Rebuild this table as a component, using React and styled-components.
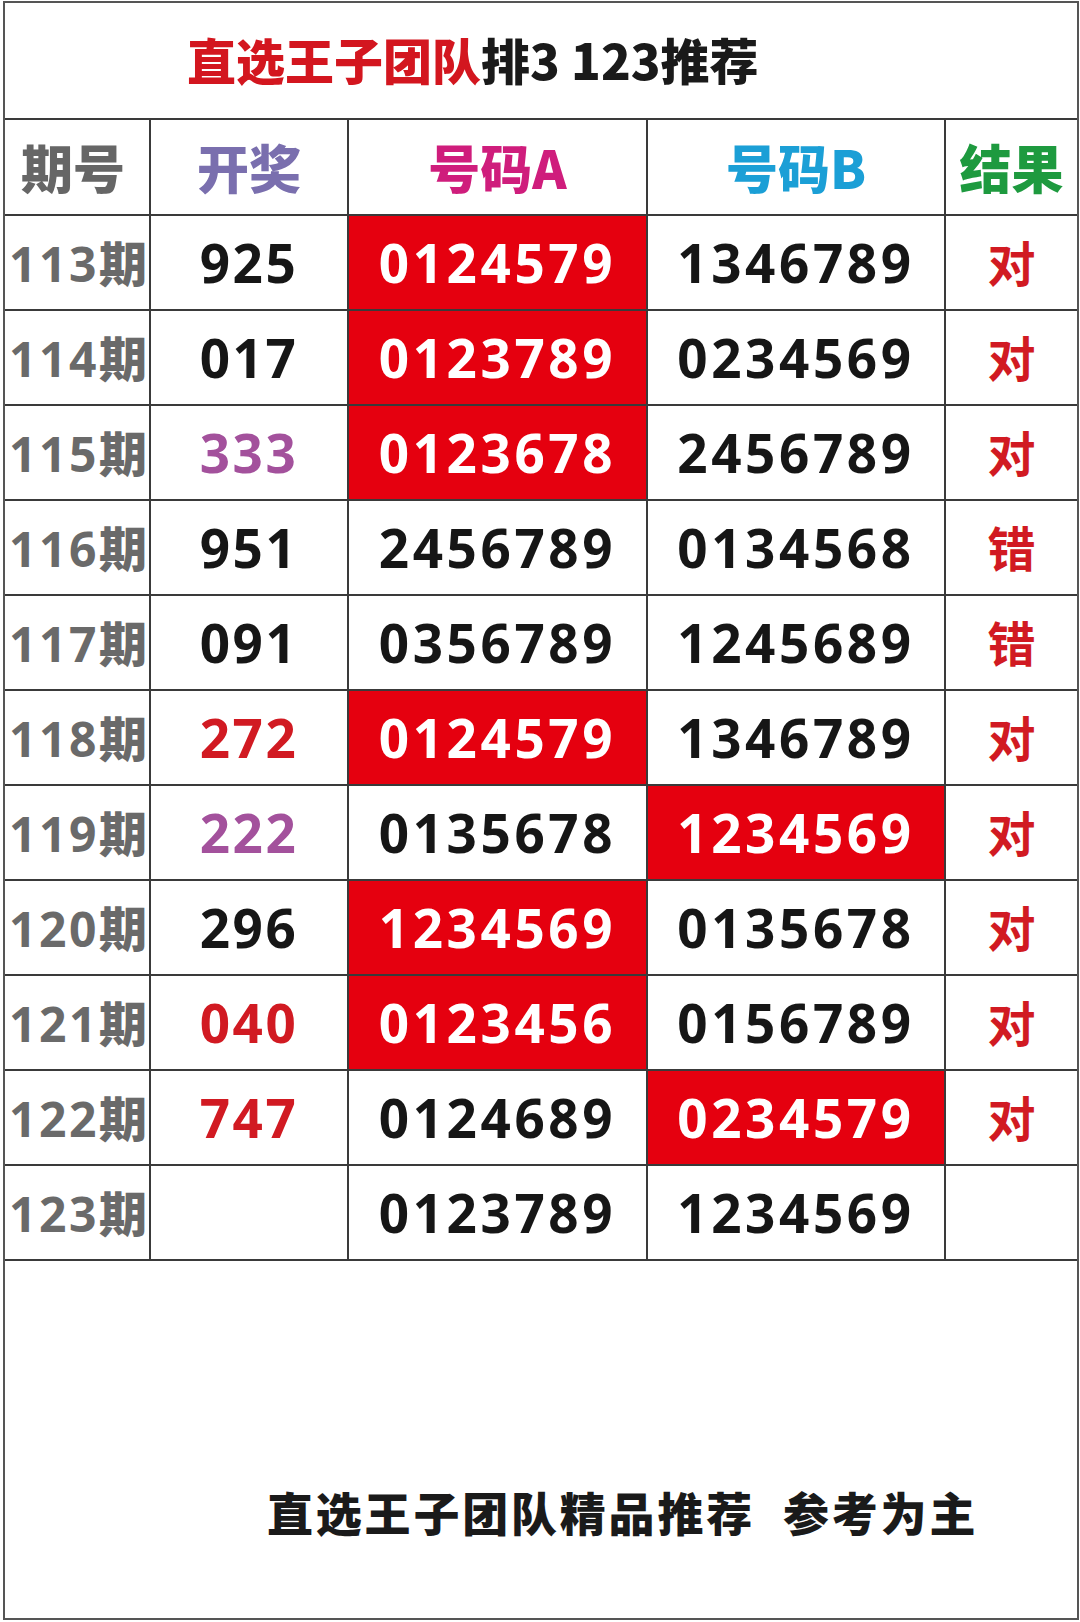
import React from "react";
import styled, { createGlobalStyle } from "styled-components";

const Global = createGlobalStyle`
  html, body { margin: 0; padding: 0; background: #fff; }
  * { box-sizing: border-box; }
`;

const LINE = "#3a3a3a";
const RED_BG = "#e5000f";
const TXT_RED = "#d11a22";
const PURPLE = "#a3519c";

const Frame = styled.div`
  width: 1076px;
  height: 1619px;
  margin: 1px 0 0 3px;
  border: 2px solid #555;
  display: flex;
  flex-direction: column;
  font-family: "Noto Sans", "Noto Sans CJK SC", sans-serif;
  font-weight: 700;
`;

const Title = styled.div`
  height: 115px;
  display: flex;
  align-items: center;
  padding-left: 182px;
  padding-bottom: 4px;
  font-family: "Noto Sans CJK SC", sans-serif;
  font-weight: 900;
  font-size: 49px;
  color: #1a1a1a;
`;

const TitleRed = styled.span`
  color: #d3161f;
`;

const Table = styled.div`
  display: grid;
  grid-template-columns: 146px 198px 299px 298px 1fr;
  grid-auto-rows: 95px;
  grid-template-rows: 96px;
  border-top: 2px solid ${LINE};
`;

const Cell = styled.div`
  display: flex;
  align-items: center;
  justify-content: ${(p) => (p.$left ? "flex-start" : "center")};
  padding-left: ${(p) => p.$pad || 0}px;
  border-bottom: 2px solid ${LINE};
  border-right: ${(p) => (p.$last ? "none" : `2px solid ${LINE}`)};
  background: ${(p) => (p.$hot ? RED_BG : "#fff")};
  color: ${(p) => p.$color || "#161616"};
  font-size: ${(p) => p.$size || 53}px;
  letter-spacing: ${(p) => p.$ls ?? 3.6}px;
  line-height: 1;
  white-space: nowrap;
  overflow: hidden;
`;

const HeadText = styled.span`
  font-family: "Noto Sans CJK SC", sans-serif;
  font-weight: 900;
  font-size: 52px;
  letter-spacing: 0;
  color: ${(p) => p.$color};
`;

const Period = styled.span`
  color: #6a6a6a;
  font-size: 48px;
  letter-spacing: 2.5px;
`;

const PeriodChar = styled.span`
  font-family: "Noto Sans CJK SC", sans-serif;
  font-weight: 900;
  font-size: 48px;
  letter-spacing: 0;
`;

const Result = styled.span`
  font-family: "Noto Sans CJK SC", sans-serif;
  font-weight: 700;
  font-size: 48px;
  color: ${TXT_RED};
  letter-spacing: 0;
  margin-bottom: 4px;
`;

const Footer = styled.div`
  flex: 1;
  display: flex;
  align-items: flex-end;
  padding: 0 0 74px 262px;
  font-family: "Noto Sans CJK SC", sans-serif;
  font-weight: 900;
  font-size: 46px;
  letter-spacing: 2.8px;
  color: #1a1a1a;
`;

const Gap = styled.span`
  display: inline-block;
  width: 28px;
`;

const rows = [
  { p: "113", k: "925", a: "0124579", b: "1346789", r: "对", hot: "a" },
  { p: "114", k: "017", a: "0123789", b: "0234569", r: "对", hot: "a" },
  { p: "115", k: "333", kc: PURPLE, a: "0123678", b: "2456789", r: "对", hot: "a" },
  { p: "116", k: "951", a: "2456789", b: "0134568", r: "错" },
  { p: "117", k: "091", a: "0356789", b: "1245689", r: "错" },
  { p: "118", k: "272", kc: TXT_RED, a: "0124579", b: "1346789", r: "对", hot: "a" },
  { p: "119", k: "222", kc: PURPLE, a: "0135678", b: "1234569", r: "对", hot: "b" },
  { p: "120", k: "296", a: "1234569", b: "0135678", r: "对", hot: "a" },
  { p: "121", k: "040", kc: TXT_RED, a: "0123456", b: "0156789", r: "对", hot: "a" },
  { p: "122", k: "747", kc: TXT_RED, a: "0124689", b: "0234579", r: "对", hot: "b" },
  { p: "123", k: "", a: "0123789", b: "1234569", r: "" },
];

export default function App() {
  return (
    <>
      <Global />
      <Frame>
        <Title>
          <TitleRed>直选王子团队</TitleRed>排3 123推荐
        </Title>
        <Table>
          <Cell $left $pad={16}>
            <HeadText $color="#666">期号</HeadText>
          </Cell>
          <Cell>
            <HeadText $color="#7a6fae">开奖</HeadText>
          </Cell>
          <Cell>
            <HeadText $color="#cf1d7c">号码A</HeadText>
          </Cell>
          <Cell>
            <HeadText $color="#1b9fd6">号码B</HeadText>
          </Cell>
          <Cell $last>
            <HeadText $color="#1e9a3f">结果</HeadText>
          </Cell>
          {rows.map((r) => (
            <React.Fragment key={r.p}>
              <Cell $left $pad={4}>
                <Period>
                  {r.p}
                  <PeriodChar>期</PeriodChar>
                </Period>
              </Cell>
              <Cell $color={r.kc} $ls={2.5}>
                {r.k}
              </Cell>
              <Cell $hot={r.hot === "a"} $color={r.hot === "a" ? "#fff" : undefined}>
                {r.a}
              </Cell>
              <Cell $hot={r.hot === "b"} $color={r.hot === "b" ? "#fff" : undefined}>
                {r.b}
              </Cell>
              <Cell $last>
                <Result>{r.r}</Result>
              </Cell>
            </React.Fragment>
          ))}
        </Table>
        <Footer>
          直选王子团队精品推荐<Gap />参考为主
        </Footer>
      </Frame>
    </>
  );
}
